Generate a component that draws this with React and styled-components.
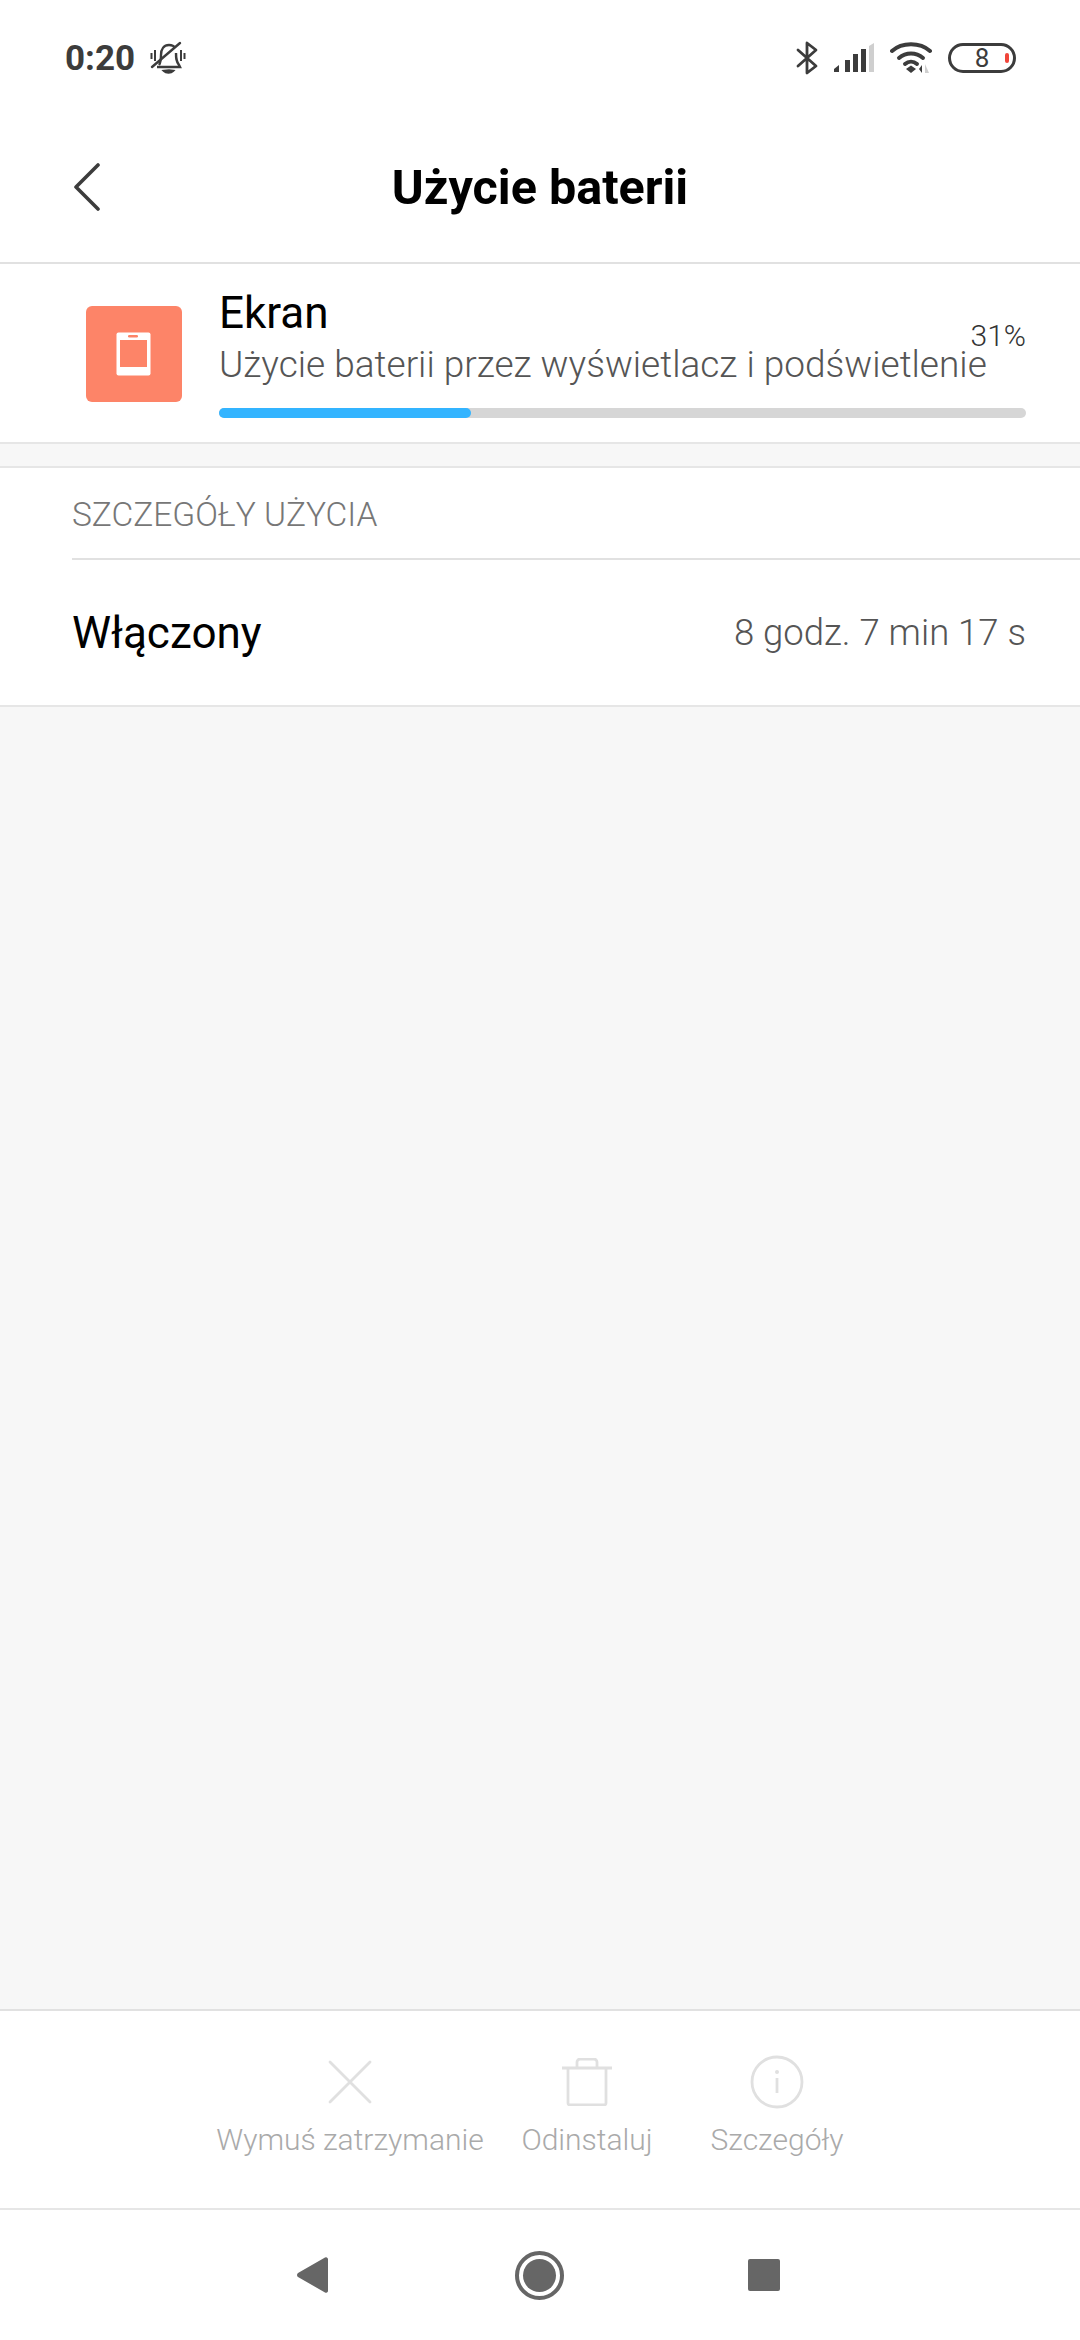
import React from "react";
import styled, { createGlobalStyle } from "styled-components";

const GlobalStyle = createGlobalStyle`
  html, body {
    margin: 0;
    padding: 0;
    background: #fff;
  }
  * {
    box-sizing: border-box;
  }
`;

const BellOffIcon = () => (
  <svg width="36" height="34" viewBox="0 0 36 34" fill="none" stroke="#3c3c3c" strokeWidth="2.4">
    <path d="M9 24c2-3 2-6 2-10 0-6 3-10 8-10 3 0 5 1 6 3" />
    <path d="M26 12c0 5 0 8 3 12l1 2H7" />
    <path d="M14 30c2 2 7 2 9 0l-4-.5z" fill="#3c3c3c" />
    <path d="M2 26L30 2" strokeLinecap="round" />
    <path d="M1.5 12v6M5 9v11M31 9v11M34.5 12v6" strokeWidth="2" />
  </svg>
);

const BluetoothIcon = () => (
  <svg width="22" height="34" viewBox="0 0 22 34" fill="none" stroke="#3c3c3c" strokeWidth="2.8" strokeLinejoin="round" strokeLinecap="round">
    <path d="M2 9l18 16-9 7V2l9 7L2 25" />
  </svg>
);

const SignalIcon = () => (
  <svg width="40" height="30" viewBox="0 0 40 30">
    <path d="M0 29v-3l5-4v7z" fill="#3c3c3c" />
    <rect x="11" y="17" width="5" height="12" fill="#3c3c3c" />
    <rect x="19" y="11" width="5" height="18" fill="#3c3c3c" />
    <rect x="27" y="6" width="5" height="23" fill="#3c3c3c" />
    <path d="M35 3l5-3v29h-5z" fill="#cfcfcf" />
  </svg>
);

const WifiIcon = () => (
  <svg width="42" height="32" viewBox="0 0 42 32" fill="none" stroke="#3c3c3c" strokeWidth="4" strokeLinecap="round">
    <path d="M2 9C12 0 30 0 40 9" />
    <path d="M9 16c7-6 17-6 24 0" />
    <path d="M15 22c3.5-3 8.5-3 12 0" />
    <path d="M16 27l5-3.500 5 3.500-5 4z" fill="#3c3c3c" stroke="none" />
    <path d="M32 23v8l-3-4z" fill="#3c3c3c" stroke="none" />
    <path d="M35 22v9h4z" fill="#cfcfcf" stroke="none" />
  </svg>
);

const ScreenIcon = () => (
  <svg width="36" height="44" viewBox="0 0 36 44">
    <rect x="0.5" y="0.5" width="34" height="43" rx="2" fill="#fff" />
    <rect x="4" y="8" width="27" height="27" fill="#fd8468" />
    <rect x="12" y="3" width="10" height="2.5" rx="1.2" fill="#fd8468" />
  </svg>
);

const CloseIcon = () => (
  <svg width="44" height="44" viewBox="0 0 44 44" fill="none" stroke="#e0e0e0" strokeWidth="2.8" strokeLinecap="round">
    <path d="M2 2l40 40M42 2L2 42" />
  </svg>
);

const TrashIcon = () => (
  <svg width="50" height="48" viewBox="0 0 50 48" fill="none" stroke="#e0e0e0" strokeWidth="2.8">
    <path d="M0 10h50" />
    <path d="M6 10v35a2 2 0 0 0 2 2h34a2 2 0 0 0 2-2V10" />
    <path d="M15 10V4a3 3 0 0 1 3-3h14a3 3 0 0 1 3 3v6" />
  </svg>
);

const InfoIcon = () => (
  <svg width="54" height="54" viewBox="0 0 54 54" fill="none" stroke="#e0e0e0" strokeWidth="2.8">
    <circle cx="27" cy="27" r="25" />
    <circle cx="27" cy="17" r="2" fill="#e0e0e0" stroke="none" />
    <path d="M27 23v15" />
  </svg>
);

const App = () => {
  return (
    <StPage>
      <GlobalStyle />
      <StStatusBar>
        <StStatusGroup>
          <StClock>0:20</StClock>
          <BellOffIcon />
        </StStatusGroup>
        <StStatusIcons>
          <BluetoothIcon />
          <SignalIcon />
          <WifiIcon />
          <StBattery>
            8
            <StBatteryLow />
          </StBattery>
        </StStatusIcons>
      </StStatusBar>

      <StHeader>
        <StBack>
          <svg width="28" height="48" viewBox="0 0 28 48" fill="none" stroke="#3c3c3c" strokeWidth="3.6" strokeLinecap="round" strokeLinejoin="round">
            <path d="M25 2L3 24l22 22" />
          </svg>
        </StBack>
        <StTitle>Użycie baterii</StTitle>
      </StHeader>

      <StUsageCard>
        <StAppIcon>
          <ScreenIcon />
        </StAppIcon>
        <StUsageBody>
          <StUsageName>Ekran</StUsageName>
          <StUsageDesc>Użycie baterii przez wyświetlacz i podświetlenie</StUsageDesc>
          <StPercent>31%</StPercent>
          <StTrack>
            <StFill style={{ width: "31.2%" }} />
          </StTrack>
        </StUsageBody>
      </StUsageCard>

      <StGap />

      <StDetails>
        <StSectionTitle>SZCZEGÓŁY UŻYCIA</StSectionTitle>
        <StRow>
          <StRowLabel>Włączony</StRowLabel>
          <StRowValue>8 godz. 7 min 17 s</StRowValue>
        </StRow>
      </StDetails>

      <StFiller />

      <StActions>
        <StAction $width={304}>
          <StActionIcon><CloseIcon /></StActionIcon>
          <StActionLabel>Wymuś zatrzymanie</StActionLabel>
        </StAction>
        <StAction $width={170}>
          <StActionIcon><TrashIcon /></StActionIcon>
          <StActionLabel>Odinstaluj</StActionLabel>
        </StAction>
        <StAction $width={210}>
          <StActionIcon><InfoIcon /></StActionIcon>
          <StActionLabel>Szczegóły</StActionLabel>
        </StAction>
      </StActions>

      <StNavBar>
        <svg width="31" height="36" viewBox="0 0 31 36">
          <path d="M28 .5a2 2 0 0 1 3 1.500v32a2 2 0 0 1-3 1.500L1 20a2.500 2.500 0 0 1 0-4z" fill="#666" />
        </svg>
        <svg width="49" height="49" viewBox="0 0 49 49">
          <circle cx="24.5" cy="24.5" r="22.5" fill="none" stroke="#666" strokeWidth="4" />
          <circle cx="24.5" cy="24.5" r="16.5" fill="#666" />
        </svg>
        <StNavSquare />
      </StNavBar>
    </StPage>
  );
};

const StPage = styled.div`
  width: 1080px;
  height: 2340px;
  display: flex;
  flex-direction: column;
  background-color: #f7f7f7;
  font-family: Roboto, "Noto Sans", sans-serif;
  overflow: hidden;
`;

const StStatusBar = styled.div`
  height: 84px;
  padding: 32px 64px 0 65px;
  display: flex;
  align-items: center;
  justify-content: space-between;
  background-color: #fff;
`;

const StStatusGroup = styled.div`
  display: flex;
  align-items: center;
  gap: 15px;
`;

const StClock = styled.span`
  font-size: 35px;
  font-weight: 700;
  color: #3c3c3c;
`;

const StStatusIcons = styled.div`
  display: flex;
  align-items: center;
  gap: 16px;
`;

const StBattery = styled.div`
  position: relative;
  width: 68px;
  height: 30px;
  border: 3px solid #3c3c3c;
  border-radius: 15px;
  display: flex;
  align-items: center;
  justify-content: center;
  font-size: 26px;
  color: #3c3c3c;
`;

const StBatteryLow = styled.span`
  position: absolute;
  right: 4px;
  top: 7px;
  width: 4px;
  height: 10px;
  border-radius: 2px;
  background-color: #f0453a;
`;

const StHeader = styled.div`
  height: 180px;
  padding-top: 28px;
  position: relative;
  display: flex;
  align-items: center;
  justify-content: center;
  background-color: #fff;
  border-bottom: 2px solid #e1e1e1;
`;

const StBack = styled.div`
  position: absolute;
  left: 73px;
  top: 79px;
  line-height: 0;
`;

const StTitle = styled.h1`
  margin: 0;
  font-size: 48.5px;
  font-weight: 700;
  color: #000;
`;

const StUsageCard = styled.div`
  height: 180px;
  padding: 0 54px 0 86px;
  display: flex;
  background-color: #fff;
  border-bottom: 2px solid #e6e6e6;
`;

const StAppIcon = styled.div`
  width: 96px;
  height: 96px;
  margin-top: 42px;
  border-radius: 6px;
  display: flex;
  align-items: center;
  justify-content: center;
  background-color: #fd8468;
`;

const StUsageBody = styled.div`
  position: relative;
  flex: 1;
  margin-left: 37px;
  padding-top: 23px;
`;

const StUsageName = styled.div`
  font-size: 44px;
  line-height: 52px;
  color: #000;
`;

const StUsageDesc = styled.div`
  margin-top: 1px;
  font-size: 37px;
  line-height: 50px;
  font-weight: 300;
  color: #555;
  white-space: nowrap;
`;

const StPercent = styled.span`
  position: absolute;
  right: 0;
  top: 54px;
  font-size: 30px;
  line-height: 36px;
  font-weight: 300;
  color: #333;
`;

const StTrack = styled.div`
  margin-top: 18px;
  height: 10px;
  border-radius: 5px;
  background-color: #d6d6d6;
`;

const StFill = styled.div`
  height: 100%;
  border-radius: 5px;
  background-color: #33b4ff;
`;

const StGap = styled.div`
  height: 22px;
`;

const StDetails = styled.div`
  padding-left: 72px;
  background-color: #fff;
  border-top: 2px solid #e6e6e6;
  border-bottom: 2px solid #e6e6e6;
`;

const StSectionTitle = styled.div`
  height: 92px;
  padding-top: 24px;
  font-size: 33.5px;
  line-height: 46px;
  font-weight: 300;
  color: #777;
  border-bottom: 2px solid #e1e1e1;
`;

const StRow = styled.div`
  height: 145px;
  padding-right: 54px;
  display: flex;
  align-items: center;
  justify-content: space-between;
`;

const StRowLabel = styled.span`
  font-size: 44px;
  color: #000;
`;

const StRowValue = styled.span`
  font-size: 36.5px;
  font-weight: 300;
  color: #555;
`;

const StFiller = styled.div`
  flex: 1;
`;

const StActions = styled.div`
  height: 201px;
  padding: 44px 0 0 198px;
  display: flex;
  align-items: flex-start;
  background-color: #fff;
  border-top: 2px solid #e1e1e1;
  border-bottom: 2px solid #e6e6e6;
`;

const StAction = styled.div`
  width: ${(props) => props.$width}px;
  display: flex;
  flex-direction: column;
  align-items: center;
`;

const StActionIcon = styled.div`
  height: 54px;
  display: flex;
  align-items: center;
  justify-content: center;
`;

const StActionLabel = styled.span`
  margin-top: 11px;
  font-size: 30px;
  line-height: 40px;
  font-weight: 300;
  color: #aaa;
  white-space: nowrap;
`;

const StNavBar = styled.div`
  height: 130px;
  padding-left: 297px;
  display: flex;
  align-items: center;
  gap: 187px;
  background-color: #fff;
`;

const StNavSquare = styled.div`
  width: 32px;
  height: 32px;
  margin-left: -3px;
  border-radius: 2px;
  background-color: #666;
`;

export default App;
